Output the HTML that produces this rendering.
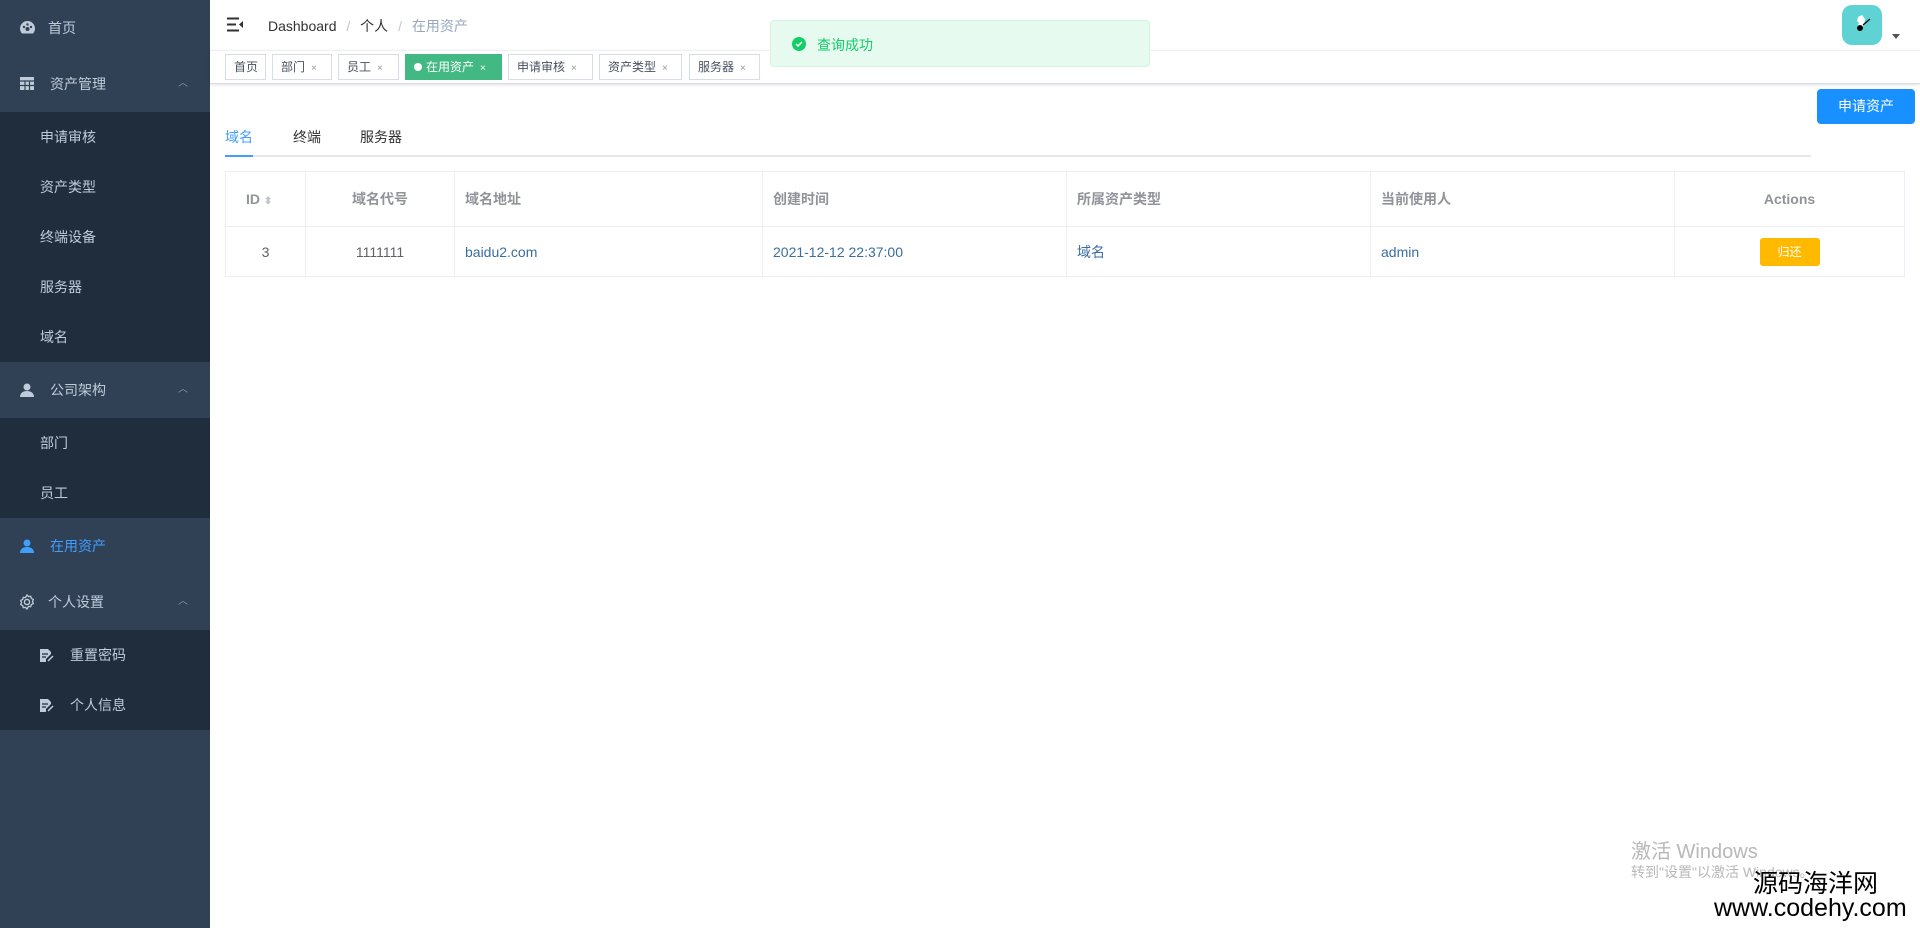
<!DOCTYPE html>
<html><head><meta charset="utf-8">
<style>
*{margin:0;padding:0;box-sizing:border-box}
body{width:1920px;height:928px;overflow:hidden;background:#fff;font-family:"Liberation Sans","Noto Sans CJK SC",sans-serif;font-size:14px;color:#303133;position:relative}
.side{position:absolute;left:0;top:0;width:210px;height:928px;background:#304156}
.mi{position:absolute;left:0;width:210px;height:56px;line-height:56px;color:#bfcbd9;font-size:14px}
.sub{position:absolute;left:0;width:210px;background:#1f2d3d}
.si{height:50px;line-height:50px;color:#bfcbd9;padding-left:40px}
.arr{position:absolute;right:22px;top:0;font-size:10px;color:#8b96a3}
.abs{position:absolute}
.tag{position:absolute;top:54px;height:26px;line-height:24px;border:1px solid #d8dce5;font-size:12px;color:#495060;padding-left:8px;background:#fff}
.tag .x{font-size:10px;color:#999;margin-left:6px}
table{border-collapse:collapse;position:absolute;left:225px;top:171px;width:1680px}
td,th{border:1px solid #ebeef5;font-size:14px}
th{height:55px;color:#909399;font-weight:bold;text-align:left;padding-left:10px}
td{height:50px;padding-left:10px;color:#3a6da0}
</style></head><body>
<div class="side">
 <div class="mi" style="top:0;padding-left:48px">首页
  <svg class="abs" style="left:20px;top:21px" width="15" height="13" viewBox="0 0 15 13"><path d="M7.5 0A7.5 7.5 0 0 0 0 7.5c0 2 .8 3.8 2 5h11c1.2-1.2 2-3 2-5A7.5 7.5 0 0 0 7.5 0z" fill="#bfcbd9"/><circle cx="7.5" cy="8" r="2" fill="#304156"/><circle cx="4" cy="6" r="1.2" fill="#304156"/><circle cx="11" cy="6" r="1.2" fill="#304156"/><circle cx="7.5" cy="3.5" r="1.2" fill="#304156"/></svg></div>
 <div class="mi" style="top:56px;padding-left:50px">资产管理<span class="arr">︿</span>
  <svg class="abs" style="left:20px;top:21px" width="14" height="13"><rect width="14" height="13" fill="#bfcbd9"/><path d="M0 4h14M5 4v9M9.5 4v9M0 8.5h14" stroke="#304156" stroke-width="1.2"/></svg></div>
 <div class="sub" style="top:112px"><div class="si">申请审核</div><div class="si">资产类型</div><div class="si">终端设备</div><div class="si">服务器</div><div class="si">域名</div></div>
 <div class="mi" style="top:362px;padding-left:50px">公司架构<span class="arr">︿</span>
  <svg class="abs" style="left:20px;top:21px" width="14" height="14"><circle cx="7" cy="4" r="3.5" fill="#bfcbd9"/><path d="M0 14c0-4 3-6 7-6s7 2 7 6z" fill="#bfcbd9"/></svg></div>
 <div class="sub" style="top:418px"><div class="si">部门</div><div class="si">员工</div></div>
 <div class="mi" style="top:518px;padding-left:50px;color:#409eff">在用资产
  <svg class="abs" style="left:20px;top:21px" width="14" height="14"><circle cx="7" cy="4" r="3.5" fill="#409eff"/><path d="M0 14c0-4 3-6 7-6s7 2 7 6z" fill="#409eff"/></svg></div>
 <div class="mi" style="top:574px;padding-left:48px">个人设置<span class="arr">︿</span>
  <svg class="abs" style="left:19px;top:20px" width="16" height="16" viewBox="0 0 16 16"><circle cx="8" cy="8" r="2.6" fill="none" stroke="#bfcbd9" stroke-width="1.4"/><path d="M8 1l1.5 1.6 2.2-.3.6 2.1 2 1-.8 2.1.8 2.1-2 1-.6 2.1-2.2-.3L8 15l-1.5-1.6-2.2.3-.6-2.1-2-1 .8-2.1-.8-2.1 2-1 .6-2.1 2.2.3z" fill="none" stroke="#bfcbd9" stroke-width="1.3"/></svg></div>
 <div class="sub" style="top:630px">
  <div class="si" style="padding-left:70px;position:relative">重置密码<svg class="abs" style="left:40px;top:19px" width="14" height="13"><path d="M0 0h8l3 3v2L6 10v3H0z" fill="#bfcbd9"/><path d="M2 5h6M2 8h4" stroke="#1f2d3d" stroke-width="1.2"/><path d="M8 12l5-5" stroke="#bfcbd9" stroke-width="1.5"/></svg></div>
  <div class="si" style="padding-left:70px;position:relative">个人信息<svg class="abs" style="left:40px;top:19px" width="14" height="13"><path d="M0 0h8l3 3v2L6 10v3H0z" fill="#bfcbd9"/><path d="M2 5h6M2 8h4" stroke="#1f2d3d" stroke-width="1.2"/><path d="M8 12l5-5" stroke="#bfcbd9" stroke-width="1.5"/></svg></div>
 </div>
</div>

<svg class="abs" style="left:227px;top:17px" width="17" height="15"><path d="M0 1.5h12M0 7.5h9M0 13.5h12" stroke="#303133" stroke-width="2"/><path d="M16 4l-4 3.5 4 3.5z" fill="#303133"/></svg>
<div class="abs" style="left:268px;top:16px;font-size:14px;color:#303133">Dashboard <span style="color:#c0c4cc;margin:0 6px">/</span> 个人 <span style="color:#c0c4cc;margin:0 6px">/</span> <span style="color:#97a8be">在用资产</span></div>
<div class="abs" style="left:1842px;top:5px;width:40px;height:40px;border-radius:10px;background:#5fd3d3"><svg width="40" height="40"><path d="M16 12l4-2 3 4-1 6-4 5-3-3 2-4-2-2z" fill="#fff"/><circle cx="18" cy="23" r="3" fill="#000"/><path d="M21 20l7-6" stroke="#000" stroke-width="1.2"/></svg></div>
<div class="abs" style="left:1892px;top:34px;width:0;height:0;border-left:4px solid transparent;border-right:4px solid transparent;border-top:5px solid #555"></div>
<div class="abs" style="left:210px;top:50px;width:1710px;height:34px;border-bottom:1px solid #d8dce5;border-top:1px solid #f0f0f0;box-shadow:0 1px 3px rgba(0,0,0,.12)"></div>
<div class="tag" style="left:225px;width:41px">首页</div>
<div class="tag" style="left:272px;width:60px">部门<span class="x">×</span></div>
<div class="tag" style="left:338px;width:61px">员工<span class="x">×</span></div>
<div class="tag" style="left:405px;width:97px;background:#42b983;border-color:#42b983;color:#fff"><span style="display:inline-block;width:8px;height:8px;border-radius:4px;background:#fff;margin-right:4px"></span>在用资产<span class="x" style="color:#fff">×</span></div>
<div class="tag" style="left:508px;width:85px">申请审核<span class="x">×</span></div>
<div class="tag" style="left:599px;width:83px">资产类型<span class="x">×</span></div>
<div class="tag" style="left:689px;width:71px">服务器<span class="x">×</span></div>

<div class="abs" style="left:770px;top:20px;width:380px;height:47px;background:#e7faf0;border:1px solid #d0f5e0;border-radius:4px"></div>
<div class="abs" style="left:792px;top:37px;width:14px;height:14px;border-radius:7px;background:#13ce66"><svg width="14" height="14"><path d="M4 7l2 2 4-4" stroke="#fff" stroke-width="1.5" fill="none"/></svg></div>
<div class="abs" style="left:817px;top:35px;color:#13ce66;font-size:14px">查询成功</div>

<div class="abs" style="left:1817px;top:89px;width:98px;height:35px;background:#1890ff;border-radius:4px;color:#fff;font-size:14px;line-height:35px;text-align:center">申请资产</div>

<div class="abs" style="left:225px;top:127px;color:#409eff">域名</div>
<div class="abs" style="left:293px;top:127px">终端</div>
<div class="abs" style="left:360px;top:127px">服务器</div>
<div class="abs" style="left:225px;top:155px;width:1586px;height:2px;background:#e4e7ed"></div>
<div class="abs" style="left:225px;top:155px;width:28px;height:2px;background:#409eff"></div>

<table>
<tr><th style="width:80px;padding-left:20px">ID <span style="color:#c0c4cc;font-size:10px">⬍</span></th><th style="width:149px;text-align:center;padding:0">域名代号</th><th style="width:308px">域名地址</th><th style="width:304px">创建时间</th><th style="width:304px">所属资产类型</th><th style="width:304px">当前使用人</th><th style="text-align:center;padding:0">Actions</th></tr>
<tr><td style="text-align:center;padding:0;color:#606266">3</td><td style="text-align:center;padding:0;color:#606266">1111111</td><td>baidu2.com</td><td>2021-12-12 22:37:00</td><td>域名</td><td>admin</td><td style="text-align:center;padding:0"><span style="display:inline-block;width:60px;height:28px;line-height:28px;background:#ffba00;color:#fff;font-size:12px;border-radius:3px">归还</span></td></tr>
</table>

<div class="abs" style="left:1631px;top:835px;font-size:20px;color:#b8b8b8">激活 Windows</div>
<div class="abs" style="left:1631px;top:862px;font-size:14px;color:#b8b8b8">转到"设置"以激活 Windows。</div>
<div class="abs" style="left:1753px;top:870px;font-size:25px;color:#000;line-height:28px">源码海洋网</div>
<div class="abs" style="left:1714px;top:894px;font-size:25px;color:#000;line-height:28px">www.codehy.com</div>
</body></html>
